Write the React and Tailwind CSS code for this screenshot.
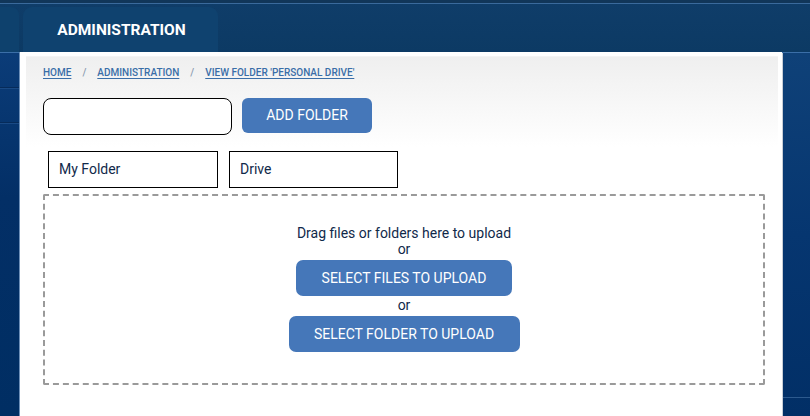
import React from "react";

export default function App() {
  const font = { fontFamily: "Roboto, 'Noto Sans', Arial, sans-serif" };
  return (
    <div
      className="w-[810px] h-[416px] overflow-hidden flex flex-col bg-[linear-gradient(180deg,#0e3b66_0%,#0c3a68_30%,#06356a_100%)]"
      style={font}
    >
      {/* top strip */}
      <div className="h-[3px] bg-[#113659] border-b border-[#3a6a9c] box-content" />
      {/* tab row */}
      <div className="h-[48px] flex items-end gap-[4px] bg-[linear-gradient(180deg,#0f3d69,#0c3a64)]">
        <div className="w-[19px] h-[45px] rounded-tr-[8px] bg-[#0e416d]" />
        <div className="w-[195px] h-[45px] rounded-t-[9px] bg-[#0f426f] flex items-center justify-center">
          <span className="text-white text-[15.5px] font-bold pt-[3px] pl-[2px]">ADMINISTRATION</span>
        </div>
      </div>
      {/* main row */}
      <div className="flex flex-1 border-t border-[#3b6fa8]">
        {/* left sidebar */}
        <div className="w-[19px] flex flex-col bg-[linear-gradient(180deg,#0b3c78,#032f66_40%,#002e63)]">
          <div className="h-[35px] border-b border-[#062b5a]" />
          <div className="h-[35px] border-t border-[#1a4a85] border-b border-b-[#062b5a]" />
          <div className="flex-1 border-t border-[#1a4a85]" />
        </div>
        {/* panel */}
        <div className="w-[763px] bg-white border-l border-[#6d8fb8] pl-[6px] pr-[4px] pt-[4px] -mt-px">
          <div className="h-full bg-[linear-gradient(180deg,#efefef_0px,#f6f6f6_40px,#ffffff_90px,#ffffff_100%)] border-t border-[#f4f4f4] pl-[17px] pt-[10px]">
            {/* breadcrumb */}
            <div className="flex items-center text-[10px] leading-[12px] font-medium text-[#3a6ea8]">
              <a className="underline underline-offset-[2px]">HOME</a>
              <span className="mx-[11px] text-[#8a9bb0]">/</span>
              <a className="underline underline-offset-[2px]">ADMINISTRATION</a>
              <span className="mx-[11px] text-[#8a9bb0]">/</span>
              <a className="underline underline-offset-[2px]">VIEW FOLDER 'PERSONAL DRIVE'</a>
            </div>
            {/* add folder row */}
            <div className="flex items-start gap-[10px] mt-[19px]">
              <input
                className="w-[189px] h-[37px] rounded-[8px] border border-black bg-white outline-none px-2 text-[14px]"
                type="text"
              />
              <button className="w-[130px] h-[35px] rounded-[6px] bg-[#4577b9] text-white text-[14px]">
                ADD FOLDER
              </button>
            </div>
            {/* name boxes */}
            <div className="flex gap-[11px] mt-[16px] ml-[5px]">
              <div className="w-[170px] h-[37px] border border-black bg-white flex items-center pl-[10px] text-[14px] text-[#10294a]">
                My Folder
              </div>
              <div className="w-[169px] h-[37px] border border-black bg-white flex items-center pl-[10px] text-[14px] text-[#10294a]">
                Drive
              </div>
            </div>
            {/* drop zone */}
            <div className="w-[722px] h-[191px] mt-[6px] border-2 border-dashed border-[#9a9a9a] rounded-[2px] flex flex-col items-center pt-[29px] text-[14px] text-[#10294a] leading-[16px]">
              <div>Drag files or folders here to upload</div>
              <div>or</div>
              <button className="mt-[3px] w-[216px] h-[36px] rounded-[7px] bg-[#4577b9] text-white text-[14px]">
                SELECT FILES TO UPLOAD
              </button>
              <div className="leading-[18px]">or</div>
              <button className="mt-[2px] w-[231px] h-[36px] rounded-[7px] bg-[#4577b9] text-white text-[14px]">
                SELECT FOLDER TO UPLOAD
              </button>
            </div>
          </div>
        </div>
        {/* right strip */}
        <div className="flex-1 flex flex-col border-l border-[#c9ced6] bg-[linear-gradient(180deg,#0f4178,#063670_50%,#022f66)]">
          <div className="flex-1 border-b border-[#2d5a8e]" />
          <div className="h-[18px]" />
        </div>
      </div>
    </div>
  );
}
